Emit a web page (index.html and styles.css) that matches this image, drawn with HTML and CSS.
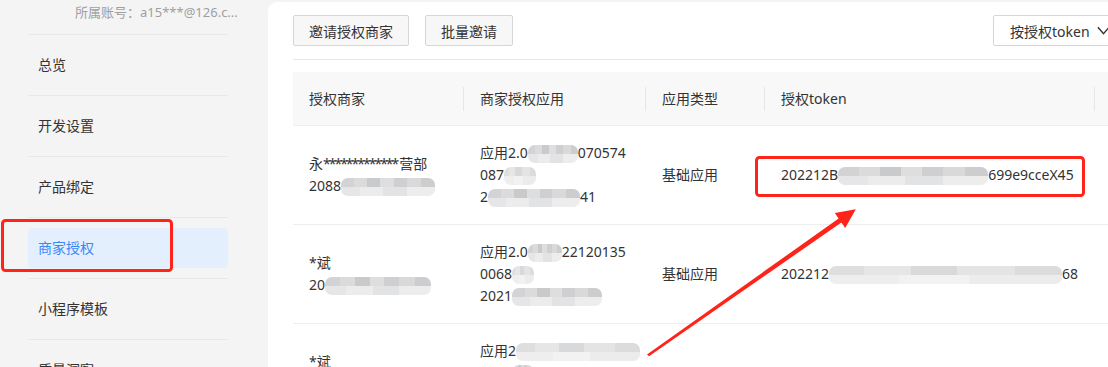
FILE: index.html
```html
<!DOCTYPE html>
<html lang="zh-CN">
<head>
    <meta charset="UTF-8">
    <title>商家授权</title>
    <link rel="stylesheet" href="styles.css">
</head>
<body>
    <div class="page">
        <aside class="sidebar">
            <div class="account">所属账号：a15***@126.c...</div>
            <nav class="menu">
                <div class="menu-item"><span>总览</span></div>
                <div class="menu-item"><span>开发设置</span></div>
                <div class="menu-item"><span>产品绑定</span></div>
                <div class="menu-item active"><span>商家授权</span></div>
                <div class="menu-item"><span>小程序模板</span></div>
                <div class="menu-item"><span>质量洞察</span></div>
            </nav>
        </aside>

        <main class="main">
            <div class="toolbar">
                <button class="btn">邀请授权商家</button>
                <button class="btn">批量邀请</button>
                <div class="spacer"></div>
                <div class="select">
                    <span>按授权token</span>
                    <svg class="chevron" viewBox="0 0 14 9"><polyline points="1,1 7,8 13,1"></polyline></svg>
                </div>
            </div>

            <div class="table">
                <div class="thead">
                    <div class="th"><span>授权商家</span></div>
                    <div class="th sep"><span>商家授权应用</span></div>
                    <div class="th sep"><span>应用类型</span></div>
                    <div class="th sep"><span>授权token</span></div>
                    <div class="th sep"><span>&nbsp;</span></div>
                </div>

                <div class="tr">
                    <div class="td">
                        <div>永<span class="stars">*************</span>营部</div>
                        <div>2088<i class="mask w94"></i></div>
                    </div>
                    <div class="td">
                        <div>应用2.0<i class="mask w50"></i>070574</div>
                        <div>087<i class="mask w32 light"></i></div>
                        <div>2<i class="mask w92"></i>41</div>
                    </div>
                    <div class="td">基础应用</div>
                    <div class="td">
                        <div>202212B<i class="mask w150"></i>699e9cceX45</div>
                    </div>
                    <div class="td"></div>
                </div>

                <div class="tr">
                    <div class="td">
                        <div>*斌</div>
                        <div>20<i class="mask w106"></i></div>
                    </div>
                    <div class="td">
                        <div>应用2.0<i class="mask w34"></i>22120135</div>
                        <div>0068<i class="mask w22 light"></i></div>
                        <div>2021<i class="mask w90"></i></div>
                    </div>
                    <div class="td">基础应用</div>
                    <div class="td">
                        <div>202212<i class="mask w233 light"></i>68</div>
                    </div>
                    <div class="td"></div>
                </div>

                <div class="tr">
                    <div class="td">
                        <div>*斌</div>
                        <div>20<i class="mask w106"></i></div>
                    </div>
                    <div class="td">
                        <div>应用2<i class="mask w124 light"></i></div>
                        <div>0068<i class="mask w22"></i></div>
                        <div>2021<i class="mask w90"></i></div>
                    </div>
                    <div class="td"></div>
                    <div class="td"></div>
                    <div class="td"></div>
                </div>
            </div>
        </main>
    </div>

    <!-- annotation layer -->
    <svg class="marks" viewBox="0 0 1108 367">
        <rect x="2.5" y="220.5" width="169" height="50" rx="3"></rect>
        <rect x="756.5" y="157.5" width="327" height="38" rx="3"></rect>
        <polygon points="647,354.5 838.6,218.5 834.8,213.1 855.8,209.2 845.2,227.9 841.4,222.5 649,356.2"></polygon>
    </svg>
</body>
</html>
```

FILE: styles.css
```css
/* Base */
* {
    box-sizing: border-box;
    margin: 0;
    padding: 0;
}

body {
    position: relative;
    width: 1108px;
    height: 367px;
    overflow: hidden;
    font-family: "Noto Sans", "Noto Sans CJK SC", sans-serif;
    font-size: 14px;
    color: #333333;
    background-color: #f4f4f4;
}

.page {
    display: flex;
    height: 100%;
}

/* Sidebar */
.sidebar {
    width: 268px;
    flex-shrink: 0;
    padding: 0 40px 0 28px;
}

.account {
    height: 35px;
    padding-left: 47px;
    line-height: 24px;
    font-size: 13px;
    color: #a0a0a0;
    white-space: nowrap;
    border-bottom: 1px solid #e8e8e8;
}

.menu-item {
    padding: 10px 0;
    border-bottom: 1px solid #e8e8e8;
}

.menu-item span {
    display: block;
    height: 40px;
    line-height: 40px;
    padding-left: 10px;
    border-radius: 4px;
}

.menu-item.active span {
    background-color: #e3effd;
    color: #3d87f5;
}

/* Main panel */
.main {
    flex: 1;
    margin-top: 2px;
    padding-left: 25px;
    background-color: #ffffff;
    border-top-left-radius: 9px;
    overflow: hidden;
}

.toolbar {
    display: flex;
    align-items: center;
    gap: 16px;
    padding: 13px 0 13px;
    border-bottom: 1px solid #e8e8e8;
}

.spacer {
    flex: 1;
}

.btn {
    height: 31px;
    padding: 0 15px;
    font-family: inherit;
    font-size: 14px;
    color: #333333;
    background-color: #f7f7f7;
    border: 1px solid #d6d6d6;
    border-radius: 2px;
}

.select {
    display: flex;
    align-items: center;
    width: 132px;
    height: 31px;
    margin-right: -17px;
    padding-left: 16px;
    gap: 7px;
    font-size: 14px;
    border: 1px solid #d6d6d6;
    border-radius: 2px;
}

.chevron {
    width: 13px;
    height: 9px;
    fill: none;
    stroke: #333333;
    stroke-width: 1.5;
}

/* Table */
.table {
    margin-top: 12px;
}

.thead,
.tr {
    display: grid;
    grid-template-columns: 170px 182px 119px 330px 1fr;
}

.thead {
    height: 54px;
    align-items: center;
    background-color: #f8f8f8;
    border-bottom: 1px solid #eeeeee;
}

.th span {
    display: block;
    line-height: 24px;
    padding-left: 16px;
}

.th.sep span {
    border-left: 1px solid #e6e6e6;
}

.tr {
    height: 99px;
    align-items: center;
    border-bottom: 1px solid #eeeeee;
}

.td {
    padding-left: 16px;
    line-height: 22px;
    white-space: nowrap;
}

.td + .td {
    padding-left: 17px;
}

.stars {
    letter-spacing: -2px;
    margin-right: 2px;
}

/* Blurred data */
.mask {
    display: inline-block;
    height: 18px;
    vertical-align: middle;
    border-radius: 7px;
    background-image:
        linear-gradient(90deg, #d3d3d5 0 14%, #dcdbdb 14% 28%, #c9cacb 28% 42%, #dedede 42% 56%, #cfcfd1 56% 70%, #d9d9d9 70% 85%, #cdcdcf 85%),
        linear-gradient(90deg, #e6e6e8 0 20%, #ececec 20% 45%, #e2e3e4 45% 70%, #ededee 70%);
    background-size: 100% 50%, 100% 50%;
    background-position: top, bottom;
    background-repeat: no-repeat;
}

.mask.light {
    background-image:
        linear-gradient(90deg, #dedede 0 15%, #e6e6e6 15% 35%, #d8d9da 35% 55%, #e4e4e4 55% 80%, #dcdcdc 80%),
        linear-gradient(90deg, #eeeeee 0 30%, #f2f2f2 30% 60%, #ececed 60%);
}

.w22 { width: 22px; }
.w32 { width: 32px; }
.w34 { width: 34px; }
.w50 { width: 50px; }
.w90 { width: 90px; }
.w92 { width: 92px; }
.w94 { width: 94px; }
.w106 { width: 106px; }
.w124 { width: 124px; }
.w150 { width: 150px; }
.w233 { width: 233px; }

/* Red annotations */
.marks {
    position: absolute;
    top: 0;
    left: 0;
    width: 1108px;
    height: 367px;
    pointer-events: none;
}

.marks rect {
    fill: none;
    stroke: #ff2419;
    stroke-width: 3;
}

.marks polygon {
    fill: #ff2419;
}
```
